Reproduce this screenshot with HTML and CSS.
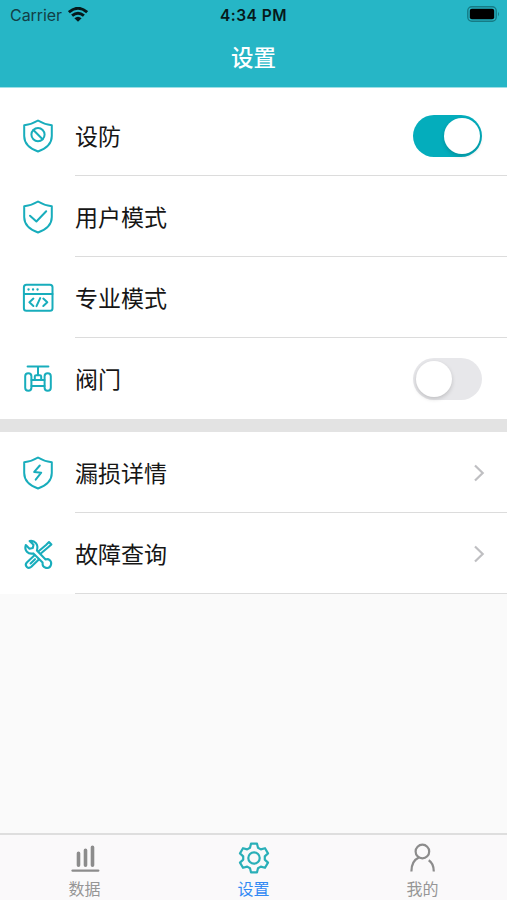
FILE: index.html
```html
<!DOCTYPE html>
<html lang="zh-CN">
<head>
<meta charset="utf-8">
<title>设置</title>
<link rel="stylesheet" href="styles.css">
</head>
<body>
<div class="app">
  <header class="header">
    <div class="status">
      <div class="carrier"><span>Carrier</span>
        <svg width="20" height="15" viewBox="0 0 20 15" fill="none" stroke="#06191b" stroke-width="2.9"><path d="M.9 5.2Q10-2.6 19.1 5.2M4.1 8.7Q10 3.7 15.9 8.7"/><path d="M6.4 11.2Q10 8.1 13.6 11.2L10 14.8Z" fill="#06191b" stroke="none"/></svg>
      </div>
      <div class="time">4:34 PM</div>
      <div class="battery"><svg width="33" height="16" viewBox="0 0 33 16"><rect x=".8" y=".8" width="28.4" height="14.4" rx="4" fill="none" stroke="#167b85" stroke-width="1.4"/><rect x="2.8" y="2.8" width="24.4" height="10.4" rx="2" fill="#000"/><path d="M31 5.7q2 2.3 0 4.6Z" fill="#167b85"/></svg></div>
    </div>
    <h1 class="title">设置</h1>
  </header>
  <main class="content">
    <section class="group group-first">
      <div class="row">
        <svg class="icon" viewBox="0 0 34 34"><path d="M17 1.5C21 4 25.5 5.6 30.8 6.2V17C30.8 24.5 25 29.6 17 32.5C9 29.6 3.2 24.5 3.2 17V6.2C8.5 5.6 13 4 17 1.5Z"/><circle cx="17" cy="15.6" r="6.6"/><path d="M12.4 11L21.6 20.2"/></svg>
        <div class="cell"><span>设防</span><span class="switch on"><i class="knob"></i></span></div>
      </div>
      <div class="row">
        <svg class="icon" viewBox="0 0 34 34"><path d="M17 1.5C21 4 25.5 5.6 30.8 6.2V17C30.8 24.5 25 29.6 17 32.5C9 29.6 3.2 24.5 3.2 17V6.2C8.5 5.6 13 4 17 1.5Z"/><path d="M9 15.7L15.4 21.5L25.2 11.3"/></svg>
        <div class="cell"><span>用户模式</span></div>
      </div>
      <div class="row">
        <svg class="icon" viewBox="0 0 34 34"><rect x="2.9" y="3.8" width="28.6" height="26" rx="2.5"/><path d="M3 13H31.5M12.4 17.6L8.4 21.3L12.4 25M22.3 17.6L26.3 21.3L22.3 25M19.2 17.1L15.5 25.2"/><path class="dots" d="M7.5 8.5h.1M12 8.5h.1M16.5 8.5h.1"/></svg>
        <div class="cell"><span>专业模式</span></div>
      </div>
      <div class="row">
        <svg class="icon" viewBox="0 0 34 34"><path d="M6.6 4.4H27.4M17 4.4V13M13.8 18V14.6Q13.8 13.2 15.2 13.2H18.8Q20.2 13.2 20.2 14.6V18M10.5 18.1H23.5M10.5 24.1H23.5"/><rect x="4.2" y="11.2" width="6.2" height="17.6" rx="3.1"/><rect x="23.6" y="11.2" width="6.2" height="17.6" rx="3.1"/></svg>
        <div class="cell"><span>阀门</span><span class="switch"><i class="knob"></i></span></div>
      </div>
    </section>
    <section class="group">
      <div class="row">
        <svg class="icon" viewBox="0 0 34 34"><path d="M17 1.5C21 4 25.5 5.6 30.8 6.2V17C30.8 24.5 25 29.6 17 32.5C9 29.6 3.2 24.5 3.2 17V6.2C8.5 5.6 13 4 17 1.5Z"/><path d="M18.8 9.5L13.2 15.9L20.2 16.7L14.7 23.6"/></svg>
        <div class="cell"><span>漏损详情</span><svg class="chevron" viewBox="0 0 12 18"><path d="M2 1.5L9.7 9L2 16.5"/></svg></div>
      </div>
      <div class="row">
        <svg class="icon tools" viewBox="0 0 34 34"><path d="M8.6 4L12.5 7.7L11.8 11L8.5 11.7L4.8 8C3 13.4 7 17.6 12.4 16.4L21.6 25.4C20.9 31.6 28.6 33 30 27.8C31 24 27.8 21.4 24.6 22.4L15.9 13.5C17.8 7.4 13.8 3 8.6 4Z"/><path d="M19.8 16.5L27.2 10.2L30.4 7.4L28 5L25 8L17.6 14.3M13.5 18.3L5.8 25.5C3 28.8 7.2 32.6 10.3 29.8L17.8 22.4M9.6 26.4L14 22.2"/></svg>
        <div class="cell"><span>故障查询</span><svg class="chevron" viewBox="0 0 12 18"><path d="M2 1.5L9.7 9L2 16.5"/></svg></div>
      </div>
    </section>
  </main>
  <nav class="tabs">
    <div class="tab"><svg class="tab-icon" viewBox="0 0 32 32"><path stroke-linecap="round" stroke-width="3.6" d="M9.5 11.2V23.3M16.5 8.2V23.3M23.5 5.2V23.3"/><path stroke-linecap="round" stroke-width="2.4" d="M3.6 28.6H29.2"/></svg><span>数据</span></div>
    <div class="tab active"><svg class="tab-icon" viewBox="-16 -16 32 32"><path d="M-4-10.2L-3-14.3H3L4-10.2L6.8-8.6L11-9.8L14-4.6L10.8-1.6V1.6L14 4.6L11 9.8L6.8 8.6L4 10.2L3 14.3H-3L-4 10.2L-6.8 8.6L-11 9.8L-14 4.6L-10.8 1.6V-1.6L-14-4.6L-11-9.8L-6.8-8.6Z"/><circle r="5.7"/></svg><span>设置</span></div>
    <div class="tab"><svg class="tab-icon" viewBox="0 0 32 32"><circle cx="15.4" cy="9.5" r="6.8"/><path d="M11.8 15.6C6.9 17.8 4.5 22 4.4 29.4M21.7 18.3C25.3 20.5 26.7 24.2 26.8 29.4"/></svg><span>我的</span></div>
  </nav>
</div>
</body>
</html>
```
FILE: styles.css
```css
* { box-sizing: border-box; }
body {
  margin: 0;
  font-family: Inter, "Noto Sans CJK SC", sans-serif;
  color: #161616;
}
.app { height: 900px; display: flex; flex-direction: column; background: #fafafa; overflow: hidden; }
.header { height: 88px; background: #26b6c6; border-bottom: 1px solid #9edfe6; flex: none; }
.status {
  height: 29px;
  display: grid;
  grid-template-columns: 1fr auto 1fr;
  align-items: center;
  padding: 0 7px 0 10px;
  font-size: 16px;
  color: #06191b;
}
.carrier { display: flex; align-items: center; gap: 6px; color: #123f46; }
.carrier span { letter-spacing: -.05px; }
.time { font-weight: 600; font-size: 15.5px; letter-spacing: .45px; padding: 1px 3px 0 0; }
.battery { display: flex; justify-content: flex-end; padding-bottom: 1px; }
.title { margin: 0; height: 58px; line-height: 58px; text-align: center; font-size: 22.5px; font-weight: 500; color: #fff; }
.content { flex: 1; }
.group { background: #fff; }
.group-first { padding-top: 7px; border-bottom: 13px solid #e3e3e3; }
.row { height: 81px; display: flex; align-items: center; padding-left: 21px; }
.icon { width: 34px; height: 34px; margin-right: 20px; flex: none; fill: none; stroke: #18adbc; stroke-width: 2; stroke-linejoin: round; stroke-linecap: round; }
.tools { stroke-width: 2.1; }
.dots { stroke-width: 2.3; }
.cell {
  flex: 1;
  height: 81px;
  display: flex;
  align-items: center;
  justify-content: space-between;
  padding: 1px 22px 0 0;
  border-bottom: 1px solid #dcdcdc;
  font-size: 23px;
}
.cell span:first-child { padding-bottom: 1px; }
.group-first .row:last-child .cell { border-bottom-color: transparent; }
.switch { width: 69px; height: 42px; margin: 1px 3px 0 0; padding: 3px; border-radius: 21px; background: #e7e7ea; display: flex; }
.switch.on { background: #04adbc; justify-content: flex-end; padding-right: 2px; }
.knob { width: 36px; height: 36px; border-radius: 50%; background: #fff; box-shadow: 0 2px 4px #0000002b; }
.chevron { width: 12px; height: 18px; fill: none; stroke: #bfbfc2; stroke-width: 2.2; }
.tabs { height: 67px; flex: none; display: flex; border-top: 2px solid #dedede; background: #faf9fa; }
.tab { flex: 1; display: flex; flex-direction: column; align-items: center; padding-top: 7px; color: #969696; font-size: 16px; line-height: 24px; }
.tab span { margin-top: 3px; }
.tab.active { color: #338af4; }
.tab-icon { width: 32px; height: 32px; flex: none; fill: none; stroke: #8c8c8c; stroke-width: 2.2; stroke-linejoin: round; }
.active .tab-icon { stroke: #2aafb8; }
```
